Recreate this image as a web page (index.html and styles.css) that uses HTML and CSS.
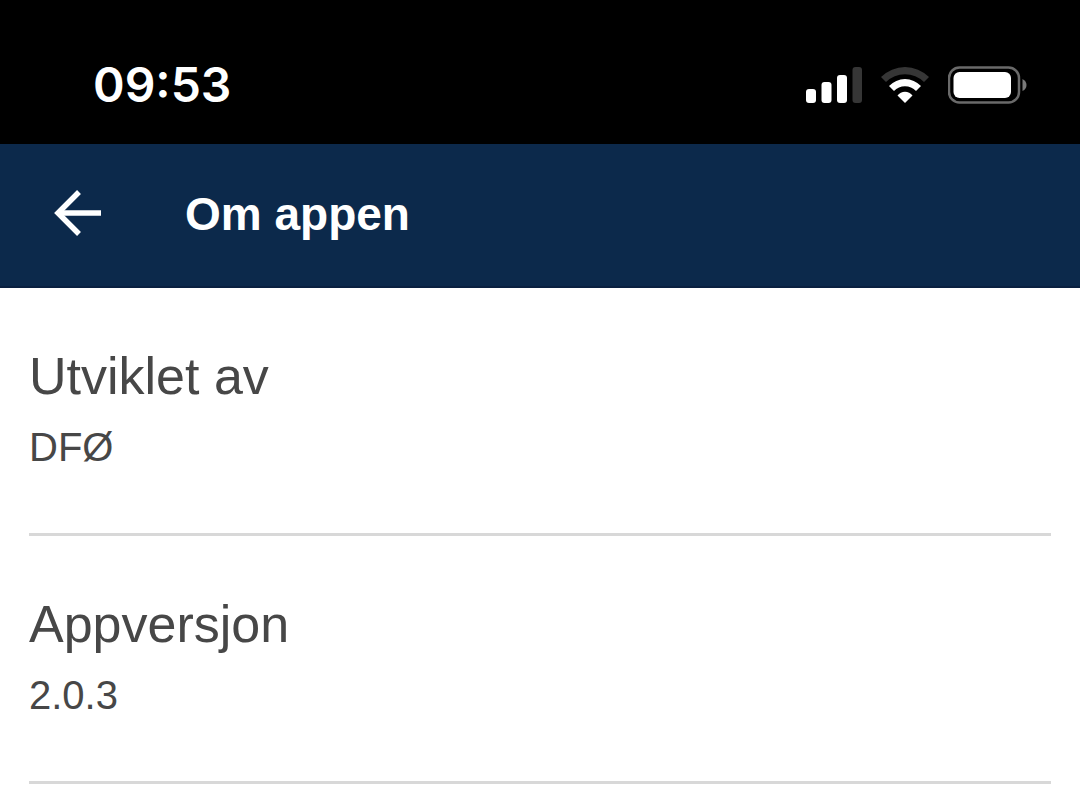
FILE: index.html
```html
<!DOCTYPE html>
<html lang="no">
<head>
    <meta charset="UTF-8">
    <meta name="viewport" content="width=device-width, initial-scale=1.0">
    <title>Om appen</title>
    <link rel="stylesheet" href="styles.css">
</head>
<body>
    <!-- Status bar -->
    <div class="status-bar">
        <time class="clock">09:53</time>
        <div class="status-icons">
            <svg class="signal" width="56" height="36" viewBox="0 0 56 36" aria-hidden="true">
                <rect x="0" y="22" width="10" height="14" rx="3" fill="#fff"/>
                <rect x="15.5" y="15" width="10" height="21" rx="3" fill="#fff"/>
                <rect x="31" y="8" width="10" height="28" rx="3" fill="#fff"/>
                <rect x="46.5" y="0" width="9.5" height="36" rx="3" fill="#363636"/>
            </svg>
            <svg class="wifi" width="48" height="36" viewBox="0 0 48 36" aria-hidden="true">
                <path d="M0 10 A34 34 0 0 1 48 10 L43 15 A27 27 0 0 0 5 15 Z" fill="#363636"/>
                <path d="M8 19 A22 22 0 0 1 40 19 L35 24 A15 15 0 0 0 13 24 Z" fill="#fff"/>
                <path d="M16.5 28.5 A9.5 9.5 0 0 1 31.5 28.5 L24 36 Z" fill="#fff"/>
            </svg>
            <svg class="battery" width="79" height="38" viewBox="0 0 79 38" aria-hidden="true">
                <rect x="1" y="1.5" width="70" height="35" rx="10.5" fill="none" stroke="#6a6a6a" stroke-width="2.5"/>
                <rect x="5.5" y="6" width="57.5" height="26" rx="6" fill="#fff"/>
                <path d="M74.5 13 Q78.5 15 78.5 19 Q78.5 23 74.5 25 Z" fill="#7a7a7a"/>
            </svg>
        </div>
    </div>

    <!-- Header -->
    <header class="app-bar">
        <button type="button" class="back-button" aria-label="Tilbake">
            <svg width="48" height="48" viewBox="0 0 48 48" aria-hidden="true">
                <path d="M26 2 L5 23 L26 44" fill="none" stroke="#fff" stroke-width="5.5"/>
                <path d="M5 23 H48" fill="none" stroke="#fff" stroke-width="5.5"/>
            </svg>
        </button>
        <h1>Om appen</h1>
    </header>

    <main class="info-list">
        <section class="info-item">
            <h2>Utviklet av</h2>
            <p>DFØ</p>
        </section>
        <section class="info-item">
            <h2>Appversjon</h2>
            <p>2.0.3</p>
        </section>
    </main>
</body>
</html>
```
FILE: styles.css
```css
* {
    margin: 0;
    padding: 0;
    box-sizing: border-box;
}

body {
    background-color: #fff;
    color: #474747;
    font-family: "Liberation Sans", Arial, sans-serif;
}

.status-bar {
    display: flex;
    justify-content: space-between;
    align-items: center;
    padding: 55px 53px 29px 93px;
    background-color: #000;
    color: #fff;
}

.clock {
    font-family: Inter, sans-serif;
    font-size: 48px;
    font-weight: 600;
    line-height: 60px;
}

.status-icons {
    display: flex;
    align-items: center;
    gap: 19px;
}

.app-bar {
    display: flex;
    align-items: center;
    gap: 84px;
    padding: 40px 53px 42px;
    background-color: #0c294b;
    border-bottom: 2px solid #0a2040;
    color: #fff;
}

.app-bar h1 {
    font-size: 46px;
    line-height: 60px;
}

.back-button {
    display: flex;
    border: none;
    background: none;
    cursor: pointer;
}

.info-list {
    padding: 0 29px;
}

.info-item {
    padding: 54px 0 61px;
    border-bottom: 3px solid #d8d8d8;
}

.info-item h2 {
    font-size: 52px;
    font-weight: normal;
    line-height: 68px;
}

.info-item p {
    margin-top: 12px;
    font-size: 40px;
    line-height: 50px;
}
```
